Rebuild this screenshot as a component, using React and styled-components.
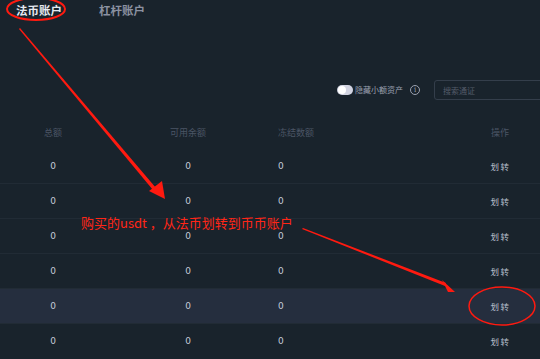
import React from 'react';
import styled, { createGlobalStyle } from 'styled-components';

const Global = createGlobalStyle`
  html, body {
    margin: 0;
    padding: 0;
    background: #19232c;
    overflow: hidden;
  }
  body {
    font-family: "Noto Sans CJK SC", "Noto Sans", sans-serif;
  }
`;

const Page = styled.div`
  position: relative;
  width: 540px;
  height: 359px;
  background: #19232c;
  overflow: hidden;
`;

const Tabs = styled.div`
  display: flex;
  gap: 37px;
  padding-left: 16px;
  height: 20px;
  align-items: center;
`;

const Tab = styled.div`
  font-size: 11.5px;
  font-weight: 700;
  line-height: 20px;
  color: ${p => (p.active ? '#e6e9f0' : '#8b91a1')};
`;

const FilterBar = styled.div`
  display: flex;
  align-items: center;
  justify-content: flex-end;
  margin-top: 60px;
  height: 20px;
  margin-right: -14px;
`;

const Toggle = styled.div`
  width: 16px;
  height: 10px;
  border-radius: 5px;
  background: #d2d4e2;
  display: flex;
  align-items: center;
  padding-left: 1px;
  box-sizing: border-box;
  &::before {
    content: '';
    width: 8px;
    height: 8px;
    border-radius: 50%;
    background: #ffffff;
  }
`;

const HideLabel = styled.span`
  margin-left: 2px;
  font-size: 8px;
  color: #9ba1b0;
  line-height: 10px;
`;

const Info = styled.span`
  margin-left: 7px;
  width: 8px;
  height: 8px;
  border: 1px solid #9ba1b0;
  border-radius: 50%;
  font-size: 7px;
  line-height: 8px;
  text-align: center;
  color: #9ba1b0;
  font-family: "DejaVu Serif", serif;
`;

const Search = styled.div`
  margin-left: 14px;
  width: 120px;
  height: 20px;
  box-sizing: border-box;
  border: 1px solid #343e4b;
  border-radius: 3px;
  font-size: 8px;
  color: #545c6a;
  padding-left: 8px;
  display: flex;
  align-items: center;
`;

const Table = styled.div`
  margin-top: 16px;
`;

const Row = styled.div`
  display: grid;
  grid-template-columns: 106px 164px 1fr 80px;
  height: ${p => (p.head ? '32px' : '35px')};
  align-items: center;
  background: ${p => (p.hl ? '#252e3e' : 'transparent')};
  border-top: ${p => (p.head || p.first ? 'none' : '1px solid #212b35')};
  box-sizing: border-box;
  font-size: ${p => (p.head ? '9px' : '10px')};
  color: ${p => (p.head ? '#4b5565' : '#c3cad8')};
`;

const Cell = styled.div`
  text-align: ${p => p.align || 'center'};
  padding-left: ${p => (p.align === 'left' ? '8px' : '0')};
  font-family: ${p => (p.num ? '"DejaVu Sans", sans-serif' : 'inherit')};
  font-size: ${p => (p.num ? '9px' : 'inherit')};
`;

const Action = styled(Cell)`
  font-size: 8.5px;
  letter-spacing: 1.5px;
  padding-left: 1px;
  color: #b9c0ce;
`;

const Overlay = styled.svg`
  position: absolute;
  left: 0;
  top: 0;
  pointer-events: none;
`;

const Note = styled.div`
  position: absolute;
  left: 81px;
  top: 213px;
  font-size: 13px;
  color: #ff2617;
  white-space: nowrap;
`;

const rows = [false, false, false, false, true, false];

export default function App() {
  return (
    <Page>
      <Global />
      <Tabs>
        <Tab active>法币账户</Tab>
        <Tab>杠杆账户</Tab>
      </Tabs>
      <FilterBar>
        <Toggle />
        <HideLabel>隐藏小额资产</HideLabel>
        <Info>i</Info>
        <Search>搜索通证</Search>
      </FilterBar>
      <Table>
        <Row head>
          <Cell>总额</Cell>
          <Cell>可用余额</Cell>
          <Cell align="left">冻结数额</Cell>
          <Cell>操作</Cell>
        </Row>
        {rows.map((hl, i) => (
          <Row key={i} hl={hl} first={i === 0}>
            <Cell num>0</Cell>
            <Cell num>0</Cell>
            <Cell num align="left">0</Cell>
            <Action>划转</Action>
          </Row>
        ))}
      </Table>
      <Overlay width="540" height="359" viewBox="0 0 540 359">
        <ellipse cx="36" cy="9" rx="29" ry="11" fill="none" stroke="#ff1a10" strokeWidth="2" />
        <polygon points="19,29 20,28 156,188 153,190" fill="#ff1a10" />
        <polygon points="149,191 162,181 165,199" fill="#ff1a10" />
        <polygon points="302,229 303,228 446,283 445,286" fill="#ff1a10" />
        <polygon points="442,280 448,292 455,292" fill="#ff1a10" />
        <ellipse cx="502" cy="306" rx="33" ry="19" fill="none" stroke="#ff1a10" strokeWidth="1.5" />
      </Overlay>
      <Note>购买的usdt ，从法币划转到币币账户</Note>
    </Page>
  );
}
